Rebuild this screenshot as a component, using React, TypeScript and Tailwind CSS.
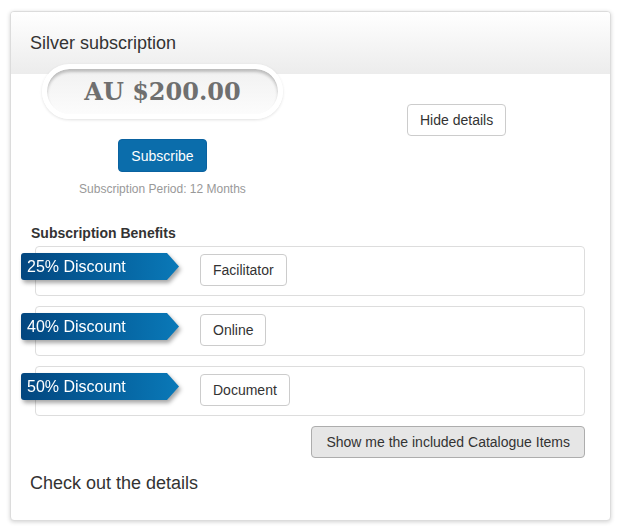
import React from "react";

const benefits = [
  { pct: "25% Discount", label: "Facilitator" },
  { pct: "40% Discount", label: "Online" },
  { pct: "50% Discount", label: "Document" },
];

export default function App() {
  return (
    <div className="w-[617px] h-[528px] bg-white pl-[10px] pt-[11px] font-['Liberation_Sans',Arial,sans-serif] text-[#333]">
      <div className="w-[601px] h-[510px] border border-[#dcdcdc] rounded-[4px] shadow-[0_1px_4px_rgba(0,0,0,0.18)] bg-white overflow-hidden">
        {/* header */}
        <div className="h-[62px] flex items-center px-[19px] bg-gradient-to-b from-white to-[#ececec]">
          <h1 className="text-[18px] leading-[20px] font-normal">Silver subscription</h1>
        </div>
        {/* body */}
        <div className="pl-[19px]">
          <div className="flex">
            <div className="w-[265px] flex flex-col items-center">
              <div className="mt-[-10px] w-[241px] h-[55px] rounded-full border-[5px] border-white bg-gradient-to-b from-[#f1f1f1] to-[#fcfcfc] shadow-[inset_0_3px_3px_rgba(0,0,0,0.22),0_1px_3px_rgba(0,0,0,0.12)] flex items-center justify-center">
                <span className="font-['DejaVu_Serif',Georgia,serif] font-bold text-[24px] leading-none text-[#6f6f6f]">
                  AU $200.00
                </span>
              </div>
              <button className="mt-[20px] h-[33px] px-[12px] rounded-[4px] bg-[#0b6dab] border border-[#0a62a0] text-white text-[14px] leading-[20px]">
                Subscribe
              </button>
              <div className="mt-[9px] text-[12px] leading-[16px] text-[#999]">
                Subscription Period: 12 Months
              </div>
            </div>
            <div className="flex-1">
              <button className="ml-[112px] mt-[30px] h-[32px] px-[12px] rounded-[4px] bg-white border border-[#ccc] text-[14px] leading-[20px] text-[#333]">
                Hide details
              </button>
            </div>
          </div>

          <div className="mt-[27px] pl-[1px] text-[14px] leading-[18px] font-bold text-[#333]">
            Subscription Benefits
          </div>

          <div className="mt-[4px] ml-[5px] w-[550px] flex flex-col gap-[10px]">
            {benefits.map((b) => (
              <div
                key={b.label}
                className="h-[50px] border border-[#ddd] rounded-[4px] flex items-start"
              >
                <div className="ml-[-15px] mt-[6px] drop-shadow-[2px_3px_2px_rgba(0,0,0,0.35)]">
                  <div className="w-[158px] h-[27px] rounded-l-[3px] bg-gradient-to-r from-[#03467f] to-[#0a79b8] [clip-path:polygon(0_0,146px_0,100%_50%,146px_100%,0_100%)] pl-[6px] text-white text-[16px] leading-[27px]">
                    {b.pct}
                  </div>
                </div>
                <button className="ml-[21px] mt-[7px] h-[32px] px-[12px] rounded-[4px] bg-white border border-[#ccc] text-[14px] leading-[20px] text-[#333]">
                  {b.label}
                </button>
              </div>
            ))}
          </div>

          <div className="ml-[5px] w-[550px] flex justify-end mt-[10px]">
            <button className="h-[32px] px-[14px] rounded-[4px] bg-[#e6e6e6] border border-[#adadad] text-[14px] leading-[20px] text-[#333]">
              Show me the included Catalogue Items
            </button>
          </div>

          <div className="mt-[15px] text-[18px] leading-[20px]">Check out the details</div>
        </div>
      </div>
    </div>
  );
}
